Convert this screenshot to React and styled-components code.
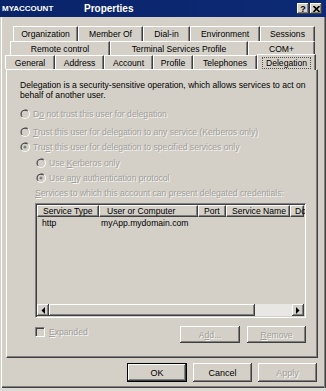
import React from "react";
import styled, { createGlobalStyle } from "styled-components";

const GlobalStyle = createGlobalStyle`
  html, body { margin: 0; padding: 0; background: #dcdad5; }
  body {
    width: 326px; height: 391px; overflow: hidden;
    font-family: "Liberation Sans", Arial, sans-serif;
    font-size: 8.6px;
  }
`;

const Window = styled.div`
  width: 326px;
  height: 388px;
  display: flex;
  flex-direction: column;
  background: #d4d0c8;
`;

const TitleBar = styled.div`
  height: 17px;
  flex: none;
  display: flex;
  align-items: center;
  background: linear-gradient(90deg, #0a246a 0%, #0d2a76 100%);
  color: #fff;
  font-weight: bold;
  padding: 0 4px 0 2px;
`;

const TitleName = styled.span`
  width: 82px;
  font-size: 8px;
`;

const TitleText = styled.span`
  flex: 1;
  font-size: 10px;
`;

const CaptionButton = styled.div`
  width: 12px;
  height: 11px;
  margin-left: 1px;
  background: #d4d0c8;
  box-shadow: inset -1px -1px #404040, inset 1px 1px #fff, inset -2px -2px #808080;
  display: flex;
  align-items: center;
  justify-content: center;
  color: #000;
  font-size: 9px;
  font-weight: bold;
`;

const Frame = styled.div`
  flex: 1;
  display: flex;
  flex-direction: column;
  padding: 9px 7px 6px 6px;
  box-shadow: inset 1px 0 #d4d0c8, inset 2px 0 #fff, inset -1px 0 #404040,
    inset -2px 0 #808080, inset 0 -1px #404040, inset 0 -2px #808080;
`;

const TabRow = styled.div`
  display: flex;
  height: ${(p) => p.$h}px;
  margin-left: ${(p) => p.$ml}px;
`;

const Tab = styled.div`
  width: ${(p) => p.$w}px;
  box-sizing: border-box;
  display: flex;
  align-items: center;
  justify-content: center;
  background: #d4d0c8;
  border-top: 1px solid #fff;
  border-left: 1px solid #fff;
  border-right: 1px solid #404040;
  box-shadow: inset -1px 0 #808080;
  color: #000;
  white-space: nowrap;
  position: relative;
  z-index: ${(p) => (p.$active ? 2 : 1)};
  margin-bottom: ${(p) => (p.$active ? -1 : 0)}px;
  margin-top: ${(p) => (p.$active ? -1 : 0)}px;
`;

const FocusLabel = styled.span`
  border: 1px dotted #505050;
  padding: 0 3px;
  line-height: 10px;
`;

const Panel = styled.div`
  width: 312px;
  height: 289px;
  box-sizing: border-box;
  border-top: 1px solid #fff;
  border-left: 1px solid #fff;
  border-right: 1px solid #404040;
  border-bottom: 1px solid #404040;
  box-shadow: inset -1px -1px #808080;
  padding: 10px 11px 0 13px;
  display: flex;
  flex-direction: column;
`;

const Desc = styled.div`
  line-height: 10px;
  color: #000;
  white-space: nowrap;
`;

const Option = styled.div`
  display: flex;
  align-items: center;
  gap: 3px;
  height: 13px;
  margin-top: ${(p) => p.$mt}px;
  margin-left: ${(p) => p.$indent || 0}px;
`;

const Dim = styled.span`
  color: #a19e99;
  text-shadow: 1px 1px 0 rgba(255, 255, 255, 0.85);
  line-height: 10px;
  white-space: nowrap;
`;

const Label = styled(Dim)`
  display: block;
  margin-top: 4px;
  margin-left: 15px;
`;

const List = styled.div`
  margin-top: 5px;
  margin-left: 15px;
  width: 271px;
  height: 115px;
  box-sizing: border-box;
  border-top: 1px solid #808080;
  border-left: 1px solid #808080;
  border-right: 1px solid #fff;
  border-bottom: 1px solid #fff;
  box-shadow: inset 1px 1px #404040, inset -1px -1px #d4d0c8;
  padding: 1px;
  display: flex;
  flex-direction: column;
  overflow: hidden;
`;

const HeaderRow = styled.div`
  display: flex;
  height: 12px;
  flex: none;
`;

const HeaderCell = styled.div`
  width: ${(p) => p.$w}px;
  flex: ${(p) => (p.$w ? "none" : 1)};
  box-sizing: border-box;
  padding-left: ${(p) => p.$pl}px;
  display: flex;
  align-items: center;
  border-top: 1px solid #fff;
  border-left: 1px solid #fff;
  border-right: 1px solid #404040;
  border-bottom: 1px solid #404040;
  box-shadow: inset -1px -1px #808080;
  color: #000;
  white-space: nowrap;
`;

const ListBody = styled.div`
  flex: 1;
`;

const DataRow = styled.div`
  display: flex;
  height: 11px;
  align-items: center;
`;

const DataCell = styled.div`
  width: ${(p) => p.$w}px;
  padding-left: ${(p) => p.$pl}px;
  box-sizing: border-box;
  color: #000;
  white-space: nowrap;
`;

const ScrollBar = styled.div`
  height: 12px;
  flex: none;
  display: flex;
  background: #e9e7e3;
`;

const ScrollButton = styled.div`
  width: ${(p) => p.$w}px;
  height: 12px;
  box-sizing: border-box;
  background: #d4d0c8;
  box-shadow: inset -1px -1px #404040, inset 1px 1px #fff, inset -2px -2px #808080;
  display: flex;
  align-items: center;
  justify-content: center;
`;

const Track = styled.div`
  flex: 1;
`;

const BottomRow = styled.div`
  display: flex;
  align-items: center;
  margin-top: 8px;
  margin-left: 15px;
  height: 17px;
  width: 271px;
`;

const CheckGroup = styled.div`
  display: flex;
  align-items: center;
  gap: 4px;
  flex: 1;
  align-self: flex-start;
  margin-top: 1px;
`;

const CheckBox = styled.div`
  width: 10px;
  height: 10px;
  box-sizing: border-box;
  border-top: 1px solid #808080;
  border-left: 1px solid #808080;
  border-right: 1px solid #fff;
  border-bottom: 1px solid #fff;
  box-shadow: inset 1px 1px #404040, inset -1px -1px #d4d0c8;
  background: #d4d0c8;
`;

const Button = styled.div`
  width: ${(p) => p.$w}px;
  height: ${(p) => p.$h}px;
  box-sizing: border-box;
  display: flex;
  align-items: center;
  justify-content: center;
  background: #d4d0c8;
  border: ${(p) => (p.$default ? "1px solid #000" : "none")};
  box-shadow: inset -1px -1px #404040, inset 1px 1px #fff, inset -2px -2px #808080;
  color: ${(p) => (p.$disabled ? "#a19e99" : "#000")};
  text-shadow: ${(p) => (p.$disabled ? "1px 1px 0 rgba(255,255,255,0.85)" : "none")};
  white-space: nowrap;
  font-size: ${(p) => (p.$big ? 9 : 8.6)}px;
`;

const ButtonGroup = styled.div`
  display: flex;
  gap: ${(p) => p.$gap}px;
`;

const Footer = styled.div`
  display: flex;
  justify-content: flex-end;
  gap: 6px;
  margin-top: 5px;
  padding-right: 2px;
`;

const Radio = ({ checked }) => (
  <svg width="10" height="10" viewBox="0 0 12 12" style={{ flex: "none" }}>
    <circle cx="6" cy="6" r="6" fill="#fff" />
    <path d="M1.76 10.24 A6 6 0 0 1 10.24 1.76 Z" fill="#808080" />
    <circle cx="6" cy="6" r="5" fill="#d4d0c8" />
    <path d="M2.46 9.54 A5 5 0 0 1 9.54 2.46 Z" fill="#404040" />
    <circle cx="6" cy="6" r="4" fill="#d4d0c8" />
    {checked && <circle cx="6" cy="6" r="1.8" fill="#808080" />}
  </svg>
);

const Arrow = ({ dir }) => (
  <svg width="4" height="7" viewBox="0 0 4 7">
    {dir === "left" ? (
      <path d="M4 0 L0.5 3.5 L4 7 Z" fill="#000" />
    ) : (
      <path d="M0 0 L3.5 3.5 L0 7 Z" fill="#000" />
    )}
  </svg>
);

const CloseGlyph = () => (
  <svg width="7" height="6" viewBox="0 0 7 6">
    <path d="M0.5 0 L6.5 6 M6.5 0 L0.5 6" stroke="#000" strokeWidth="1.6" />
  </svg>
);

const rows = [
  { h: 15, ml: 7, tabs: [["Organization", 65], ["Member Of", 65], ["Dial-in", 47], ["Environment", 70], ["Sessions", 55]] },
  { h: 14, ml: 4, tabs: [["Remote control", 100], ["Terminal Services Profile", 138], ["COM+", 67]] },
  { h: 14, ml: -1, tabs: [["General", 50], ["Address", 49], ["Account", 49], ["Profile", 40], ["Telephones", 64], ["Delegation", 59, true]] },
];

const columns = [
  ["Service Type", 62, 5],
  ["User or Computer", 99, 7],
  ["Port", 28, 5],
  ["Service Name", 64, 5],
  ["Do", 0, 4],
];

export default function App() {
  return (
    <>
      <GlobalStyle />
      <Window>
        <TitleBar>
          <TitleName>MYACCOUNT</TitleName>
          <TitleText>Properties</TitleText>
          <CaptionButton>?</CaptionButton>
          <CaptionButton>
            <CloseGlyph />
          </CaptionButton>
        </TitleBar>
        <Frame>
          {rows.map((row, i) => (
            <TabRow key={i} $h={row.h} $ml={row.ml}>
              {row.tabs.map(([name, w, active]) => (
                <Tab key={name} $w={w} $active={active}>
                  {active ? <FocusLabel>{name}</FocusLabel> : name}
                </Tab>
              ))}
            </TabRow>
          ))}
          <Panel>
            <Desc>
              Delegation is a security-sensitive operation, which allows services to act on
              <br />
              behalf of another user.
            </Desc>
            <Option $mt={7}>
              <Radio />
              <Dim>D<u>o</u> not trust this user for delegation</Dim>
            </Option>
            <Option $mt={5}>
              <Radio />
              <Dim><u>T</u>rust this user for delegation to any service (Kerberos only)</Dim>
            </Option>
            <Option $mt={2}>
              <Radio checked />
              <Dim>Tru<u>s</u>t this user for delegation to specified services only</Dim>
            </Option>
            <Option $mt={3} $indent={16}>
              <Radio />
              <Dim>Use <u>K</u>erberos only</Dim>
            </Option>
            <Option $mt={2} $indent={16}>
              <Radio checked />
              <Dim>Use a<u>n</u>y authentication protocol</Dim>
            </Option>
            <Label>
              <u>S</u>ervices to which this account can present delegated credentials:
            </Label>
            <List>
              <HeaderRow>
                {columns.map(([name, w, pl]) => (
                  <HeaderCell key={name} $w={w} $pl={pl}>
                    {name}
                  </HeaderCell>
                ))}
              </HeaderRow>
              <ListBody>
                <DataRow>
                  <DataCell $w={62} $pl={5}>http</DataCell>
                  <DataCell $w={160} $pl={2}>myApp.mydomain.com</DataCell>
                </DataRow>
              </ListBody>
              <ScrollBar>
                <ScrollButton $w={12}>
                  <Arrow dir="left" />
                </ScrollButton>
                <ScrollButton $w={206} />
                <Track />
                <ScrollButton $w={12}>
                  <Arrow dir="right" />
                </ScrollButton>
              </ScrollBar>
            </List>
            <BottomRow>
              <CheckGroup>
                <CheckBox />
                <Dim><u>E</u>xpanded</Dim>
              </CheckGroup>
              <ButtonGroup $gap={7}>
                <Button $w={60} $h={17} $disabled>A<u>d</u>d...</Button>
                <Button $w={59} $h={17} $disabled><u>R</u>emove</Button>
              </ButtonGroup>
            </BottomRow>
          </Panel>
          <Footer>
            <Button $w={60} $h={19} $default $big>OK</Button>
            <Button $w={59} $h={19} $big>Cancel</Button>
            <Button $w={59} $h={19} $big $disabled>Apply</Button>
          </Footer>
        </Frame>
      </Window>
    </>
  );
}
